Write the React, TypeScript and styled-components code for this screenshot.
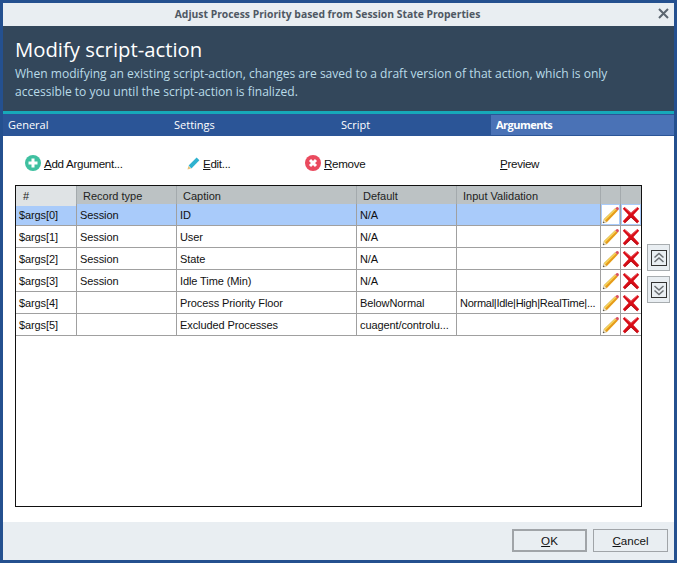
import styled, { createGlobalStyle } from 'styled-components';

const GlobalStyle = createGlobalStyle`
	html, body {
		margin: 0;
		padding: 0;
		background: #fff;
	}
`

const rows = [
	{ id: '$args[0]', type: 'Session', caption: 'ID', def: 'N/A', validation: '' },
	{ id: '$args[1]', type: 'Session', caption: 'User', def: 'N/A', validation: '' },
	{ id: '$args[2]', type: 'Session', caption: 'State', def: 'N/A', validation: '' },
	{ id: '$args[3]', type: 'Session', caption: 'Idle Time (Min)', def: 'N/A', validation: '' },
	{ id: '$args[4]', type: '', caption: 'Process Priority Floor', def: 'BelowNormal', validation: 'Normal|Idle|High|RealTime|...' },
	{ id: '$args[5]', type: '', caption: 'Excluded Processes', def: 'cuagent/controlu...', validation: '' },
]

const PencilIcon = () => (
	<svg width="18" height="18" viewBox="0 0 18 18">
		<path d="M1 17 L2 13.2 L4.8 16 Z" fill="#f5e6c4" stroke="#9a8a60" strokeWidth="0.4" />
		<path d="M1 17 L1.4 15.4 L2.6 16.6 Z" fill="#333" />
		<path d="M2 13.2 L13.2 2.4 L15.6 4.8 L4.8 16 Z" fill="#f9d65a" />
		<path d="M3.2 14.6 L14.2 3.6 L15.6 4.8 L4.8 16 Z" fill="#e59a1c" />
		<path d="M2 13.2 L13.2 2.4" stroke="#c9991f" strokeWidth="0.5" fill="none" />
		<path d="M13.2 2.4 L14.6 1.2 C15.2 0.8 15.9 1 16.4 1.6 C17 2.2 17.1 2.9 16.7 3.5 L15.6 4.8 Z" fill="#d8505f" />
	</svg>
)

const CrossIcon = () => (
	<svg width="18" height="18" viewBox="0 0 18 18">
		<path
			d="M2.6 1 L9 6.6 L15.4 1 L17.2 2.8 L11.4 9 L17.2 15.2 L15.2 17.2 L9 11.4 L2.8 17.2 L0.8 15.2 L6.6 9 L0.8 2.8 Z"
			fill="#d90c16"
		/>
		<path d="M2.6 1.6 L9 7.2 L15.4 1.6" fill="none" stroke="#ee7a80" strokeWidth="0.7" />
		<path d="M2.8 16.8 L9 11 L15.2 16.8" fill="none" stroke="#9c0d14" strokeWidth="0.7" />
	</svg>
)

const Chevrons = ({ up }: { up?: boolean }) => (
	<svg width="14" height="14" viewBox="0 0 14 14" fill="none" stroke="#6b6f73" strokeWidth="1.5">
		{up ? (
			<>
				<path d="M2.5 6.5 L7 2.5 L11.5 6.5" />
				<path d="M2.5 11 L7 7 L11.5 11" />
			</>
		) : (
			<>
				<path d="M2.5 3 L7 7 L11.5 3" />
				<path d="M2.5 7.5 L7 11.5 L11.5 7.5" />
			</>
		)}
	</svg>
)

const App = () => {
	return (
		<>
			<GlobalStyle />
			<Window>
				<TitleBar>
					<TitleText>Adjust Process Priority based from Session State Properties</TitleText>
					<CloseIcon>
						<svg width="11" height="11" viewBox="0 0 11 11" stroke="#5c6670" strokeWidth="2">
							<path d="M1 1 L10 10 M10 1 L1 10" />
						</svg>
					</CloseIcon>
				</TitleBar>
				<Banner>
					<BannerTitle>Modify script-action</BannerTitle>
					<BannerText>
						When modifying an existing script-action, changes are saved to a draft version of that action, which is only
						<br />
						accessible to you until the script-action is finalized.
					</BannerText>
				</Banner>
				<Tabs>
					<Tab $width={166}>General</Tab>
					<Tab $width={167}>Settings</Tab>
					<Tab $width={155}>Script</Tab>
					<Tab $width={183} $active>Arguments</Tab>
				</Tabs>
				<Content>
					<Toolbar>
						<ToolButton $width={162}>
							<svg width="16" height="16" viewBox="0 0 16 16">
								<circle cx="8" cy="8" r="8" fill="#3fc0a0" />
								<path d="M8 3.5 V12.5 M3.5 8 H12.5" stroke="#fff" strokeWidth="3" />
							</svg>
							<span><u>A</u>dd Argument...</span>
						</ToolButton>
						<ToolButton $width={118}>
							<svg width="13" height="14" viewBox="0 0 13 14">
								<path d="M0.5 13.5 L1.4 10 L4 12.6 Z" fill="#e6c27a" />
								<path d="M1.6 9.6 L9.6 1.4 L12.4 4.2 L4.4 12.4 Z" fill="#2fb2cf" />
							</svg>
							<span><u>E</u>dit...</span>
						</ToolButton>
						<ToolButton $width={195}>
							<svg width="16" height="16" viewBox="0 0 16 16">
								<circle cx="8" cy="8" r="8" fill="#ea4a5e" />
								<path d="M5 5 L11 11 M11 5 L5 11" stroke="#fff" strokeWidth="3" />
							</svg>
							<span><u>R</u>emove</span>
						</ToolButton>
						<ToolButton $width={80}>
							<span><u>P</u>review</span>
						</ToolButton>
					</Toolbar>
					<GridArea>
						<Table>
							<HeaderRow>
								<HeaderCell $first>#</HeaderCell>
								<HeaderCell>Record type</HeaderCell>
								<HeaderCell>Caption</HeaderCell>
								<HeaderCell>Default</HeaderCell>
								<HeaderCell>Input Validation</HeaderCell>
								<HeaderCell />
								<HeaderCell />
							</HeaderRow>
							{rows.map((row, i) => (
								<Row key={row.id} $selected={i === 0}>
									<Cell>{row.id}</Cell>
									<Cell>{row.type}</Cell>
									<Cell>{row.caption}</Cell>
									<Cell>{row.def}</Cell>
									<Cell $tight>{row.validation}</Cell>
									<IconCell $selected={i === 0}><PencilIcon /></IconCell>
									<IconCell $selected={i === 0}><CrossIcon /></IconCell>
								</Row>
							))}
						</Table>
						<MoveButtons>
							<MoveButton><MoveInner><Chevrons up /></MoveInner></MoveButton>
							<MoveButton><MoveInner><Chevrons /></MoveInner></MoveButton>
						</MoveButtons>
					</GridArea>
				</Content>
				<Footer>
					<FooterButton $default><u>O</u>K</FooterButton>
					<FooterButton><u>C</u>ancel</FooterButton>
				</Footer>
			</Window>
		</>
	)
}

const Window = styled.div`
	width: 677px;
	height: 563px;
	box-sizing: border-box;
	border: 3px solid #24508f;
	display: flex;
	flex-direction: column;
	font-family: "Liberation Sans", Arial, sans-serif;
	font-size: 11px;
	color: #111;
	overflow: hidden;
`

const TitleBar = styled.div`
	height: 23px;
	flex: none;
	background: #e9eef2;
	display: flex;
	align-items: center;
	justify-content: center;
	position: relative;
`

const TitleText = styled.div`
	font-family: "Open Sans", sans-serif;
	font-size: 10.35px;
	font-weight: 700;
	color: #4f5863;
	margin-left: -22px;
	margin-top: -1px;
`

const CloseIcon = styled.div`
	position: absolute;
	right: 5px;
	top: 5px;
	width: 11px;
	height: 11px;
	display: flex;
`

const Banner = styled.div`
	height: 85px;
	flex: none;
	box-sizing: border-box;
	background: #33475b;
	padding: 9px 12px 0;
`

const BannerTitle = styled.div`
	font-family: "Open Sans", sans-serif;
	font-size: 20.3px;
	line-height: 28px;
	color: #fff;
`

const BannerText = styled.div`
	font-family: "Open Sans", sans-serif;
	font-size: 12.06px;
	line-height: 17.5px;
	color: #b9dbe8;
	margin-top: 2px;
	white-space: nowrap;
`

const Tabs = styled.div`
	height: 25px;
	flex: none;
	box-sizing: border-box;
	border-top: 3px solid #17a9b9;
	background: #2b5597;
	display: flex;
`

const Tab = styled.div<{ $width: number; $active?: boolean }>`
	width: ${p => p.$width}px;
	box-sizing: border-box;
	padding-left: 5px;
	margin: ${p => (p.$active ? '1px 0' : '0')};
	line-height: ${p => (p.$active ? '20px' : '22px')};
	color: #fff;
	font-family: "Open Sans", sans-serif;
	font-size: 11px;
	font-weight: ${p => (p.$active ? 700 : 400)};
	letter-spacing: ${p => (p.$active ? '-0.5px' : '0')};
	background: ${p => (p.$active ? '#4a72b6' : 'transparent')};
`

const Content = styled.div`
	flex: 1;
	background: #fff;
	display: flex;
	flex-direction: column;
	min-height: 0;
`

const Toolbar = styled.div`
	height: 49px;
	flex: none;
	display: flex;
	align-items: center;
	padding: 5px 0 0 22px;
	box-sizing: border-box;
`

const ToolButton = styled.div<{ $width: number }>`
	width: ${p => p.$width}px;
	flex: none;
	display: flex;
	align-items: center;
	gap: 3px;
	font-size: 11.6px;
	letter-spacing: -0.3px;
	white-space: nowrap;
`

const GridArea = styled.div`
	display: flex;
	padding-left: 12px;
	height: 322px;
	flex: none;
`

const Table = styled.div`
	width: 627px;
	height: 322px;
	box-sizing: border-box;
	border: 1px solid #111;
	flex: none;
`

const columns = '61px 100px 180px 100px 144px 20px 20px'

const HeaderRow = styled.div`
	display: grid;
	grid-template-columns: ${columns};
	height: 18px;
	background: #bcc2c4;
`

const HeaderCell = styled.div<{ $first?: boolean }>`
	box-sizing: border-box;
	border-right: 1px solid #a4aaad;
	padding-left: ${p => (p.$first ? '7px' : '6px')};
	line-height: 20px;
	font-size: 11px;
	color: #222;
	background: ${p => (p.$first ? '#dfe3e5' : 'transparent')};
	&:last-child {
		border-right: 0;
	}
`

const Row = styled.div<{ $selected?: boolean }>`
	display: grid;
	grid-template-columns: ${columns};
	height: 22px;
	box-sizing: border-box;
	border-bottom: 1px solid #a0a0a0;
	background: ${p => (p.$selected ? '#a9cbfa' : '#fff')};
`

const Cell = styled.div<{ $tight?: boolean }>`
	box-sizing: border-box;
	border-right: 1px solid #a0a0a0;
	padding-left: 3px;
	line-height: 22px;
	font-size: 11px;
	letter-spacing: ${p => (p.$tight ? '-0.27px' : '-0.1px')};
	white-space: nowrap;
	overflow: hidden;
`

const IconCell = styled.div<{ $selected?: boolean }>`
	box-sizing: border-box;
	border-right: 1px solid #a0a0a0;
	display: flex;
	align-items: center;
	justify-content: center;
	background: ${p => (p.$selected ? '#fff' : 'transparent')};
	box-shadow: ${p => (p.$selected ? 'inset 0 0 0 1px #a9cbfa' : 'none')};
	&:last-child {
		border-right: 0;
	}
`

const MoveButtons = styled.div`
	display: flex;
	flex-direction: column;
	gap: 5px;
	margin: 59px 0 0 5px;
`

const MoveButton = styled.div`
	width: 23px;
	height: 27px;
	box-sizing: border-box;
	border: 1px solid #a8adb0;
	background: #e9eef2;
	display: flex;
	align-items: center;
	justify-content: center;
`

const MoveInner = styled.div`
	width: 16px;
	height: 16px;
	box-sizing: border-box;
	border: 1px solid #333;
	display: flex;
	align-items: center;
	justify-content: center;
`

const Footer = styled.div`
	height: 38px;
	flex: none;
	box-sizing: border-box;
	background: #e9eef2;
	display: flex;
	justify-content: flex-end;
	align-items: flex-start;
	gap: 6px;
	padding: 7px 6px 0 0;
`

const FooterButton = styled.div<{ $default?: boolean }>`
	width: 75px;
	height: 23px;
	box-sizing: border-box;
	border: ${p => (p.$default ? '2px' : '1px')} solid #a0a4a8;
	background: #e9eef2;
	display: flex;
	align-items: center;
	justify-content: center;
	font-size: 11.6px;
	color: #111;
`

export default App
